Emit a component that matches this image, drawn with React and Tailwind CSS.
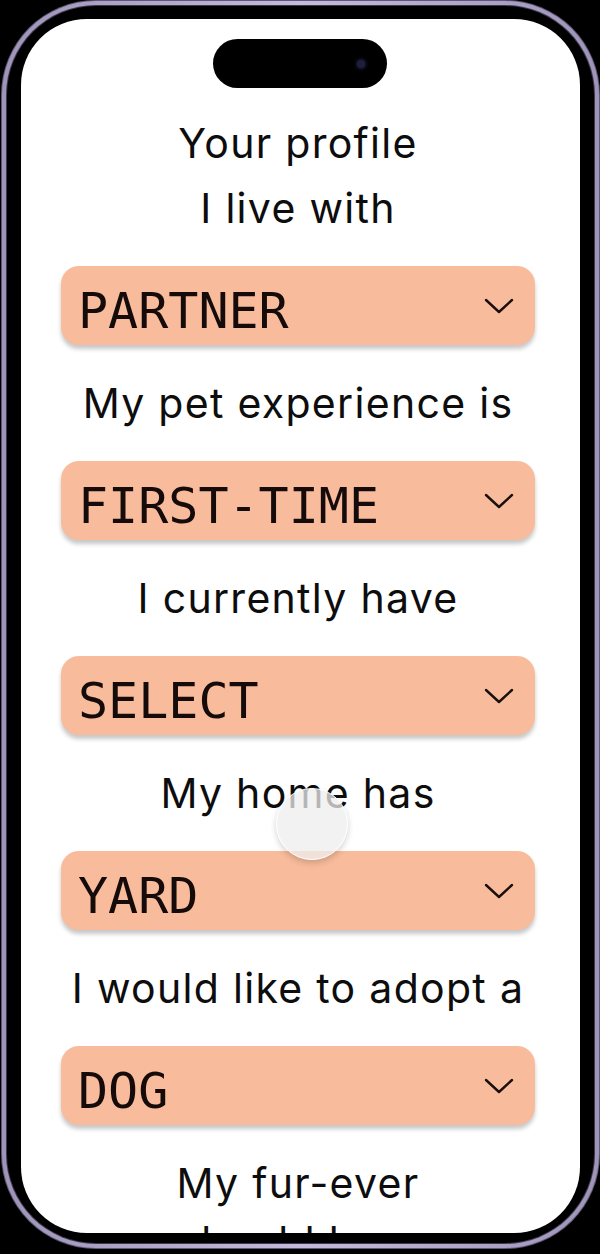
import React from "react";

// profile questions shown on the phone screen
const questions = [
  { label: "I live with", value: "PARTNER" },
  { label: "My pet experience is", value: "FIRST-TIME" },
  { label: "I currently have", value: "SELECT" },
  { label: "My home has", value: "YARD" },
  { label: "I would like to adopt a", value: "DOG" },
];

function Chevron() {
  return (
    <svg className="w-[30px] h-[16px]" viewBox="0 0 30 16" fill="none">
      <polyline points="2,2 15,14 28,2" stroke="#1a0f0f" strokeWidth="2.4" strokeLinecap="round" strokeLinejoin="round" />
    </svg>
  );
}

function Select({ value }) {
  return (
    <div className="h-[79px] shrink-0 rounded-[18px] bg-[#f8bc9c] shadow-[0_4px_4px_rgba(0,0,0,0.22)] flex items-center justify-between pl-[17px] pr-[21px]">
      <span className="mt-[10px] text-[50px] leading-none text-[#150b0b] font-['DejaVu_Sans_Mono',monospace]">
        {value}
      </span>
      <Chevron />
    </div>
  );
}

function Label({ children }) {
  return (
    <p className="mt-[26px] mb-[25px] text-center text-[41px] leading-[65px] tracking-[1.3px] text-[#0d0d0d] font-['Inter',sans-serif]">
      {children}
    </p>
  );
}

export default function App() {
  return (
    <div className="relative w-[600px] h-[1254px] bg-black overflow-hidden">
      {/* phone rim */}
      <div className="ml-[1px] w-[599px] rounded-[95px] bg-[#5f5775] p-[1px]">
        <div className="rounded-[94px] bg-gradient-to-r from-[#9d94b8] via-[#c4bbdc] to-[#9d94b8] p-[4px]">
          <div className="rounded-[90px] bg-[#3e384c] p-[1px]">
            <div className="rounded-[89px] bg-black pt-[13px] pb-[10px] px-[14px]">
              {/* screen */}
              <div className="h-[1214px] rounded-[66px] bg-white overflow-hidden flex flex-col pl-[40px] pr-[45px]">
                <div className="mt-[20px] mx-auto shrink-0 w-[174px] h-[49px] rounded-full bg-black flex items-center justify-end pr-[22px] translate-x-[2px]">
                  <div className="w-[8px] h-[8px] rounded-full bg-[#1c1f3d] shadow-[0_0_4px_#2a2f66]" />
                </div>

                <div className="mt-[23px] text-center text-[41px] leading-[65px] tracking-[1.3px] text-[#0d0d0d] font-['Inter',sans-serif]">
                  <p>Your profile</p>
                  <p>{questions[0].label}</p>
                </div>

                <div className="mt-[25px] flex flex-col">
                  {questions.map((q, i) => (
                    <React.Fragment key={q.value}>
                      <Select value={q.value} />
                      {i < questions.length - 1 && <Label>{questions[i + 1].label}</Label>}
                    </React.Fragment>
                  ))}
                  <Label>
                    <span className="block">My fur-ever</span>
                    <span className="block -mt-[7px]">should be a</span>
                  </Label>
                </div>
              </div>
            </div>
          </div>
        </div>
      </div>

      {/* touch indicator */}
      <div className="absolute left-[276px] top-[788px] w-[72px] h-[72px] rounded-full bg-[rgba(238,238,238,0.75)] border border-white shadow-[0_3px_6px_rgba(0,0,0,0.18)]" />
    </div>
  );
}
